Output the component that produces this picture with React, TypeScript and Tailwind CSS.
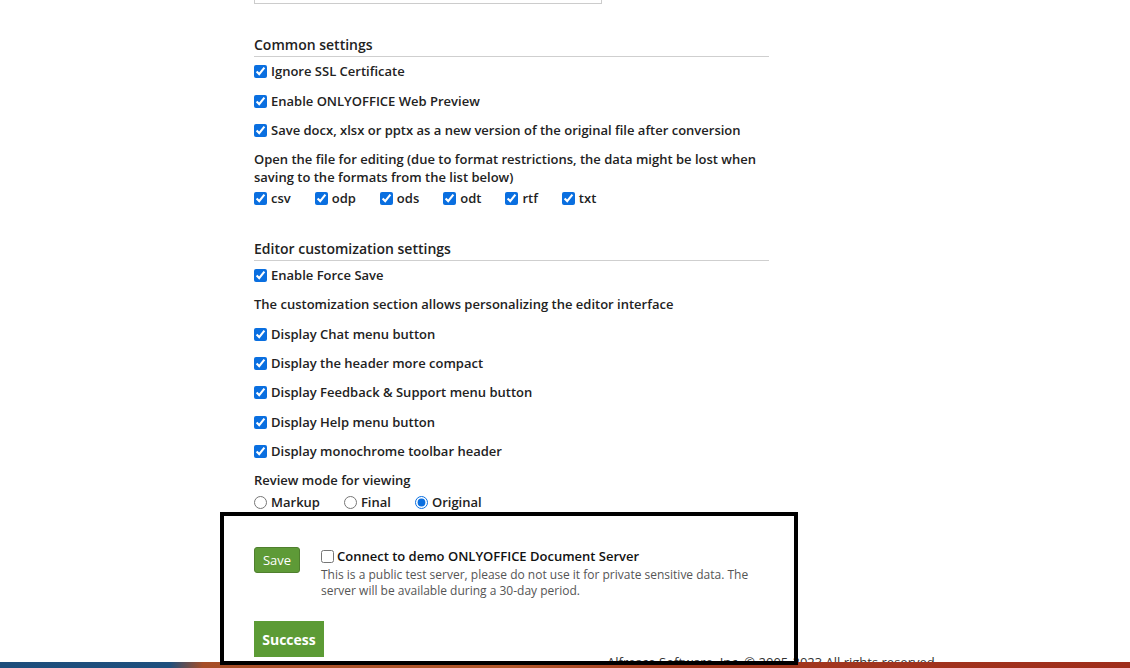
import type { ReactNode } from 'react';

const labelCls = "text-[13px] font-semibold text-[#222] leading-[18px]";

function Check({ children, className = '' }: { children: ReactNode; className?: string }) {
    return (
        <label className={`flex h-[18px] items-center gap-[4px] ${className}`}>
            <input type="checkbox" defaultChecked className="m-0 h-[13px] w-[13px] accent-[#0a6fe0]" />
            <span className={labelCls}>{children}</span>
        </label>
    );
}

function Heading({ children, className = '' }: { children: ReactNode; className?: string }) {
    return (
        <div className={`w-[515px] border-b border-[#cfcfcf] ${className}`}>
            <h3 className="h-[21px] text-[14px] font-semibold leading-[20px] text-[#222]">{children}</h3>
        </div>
    );
}

const formats = ['csv', 'odp', 'ods', 'odt', 'rtf', 'txt'];

export default function App() {
    return (
        <div
            className="relative h-[668px] w-[1130px] overflow-hidden bg-white"
            style={{ fontFamily: '"Open Sans", "Noto Sans", sans-serif' }}
        >
            <div className="flex flex-col pl-[254px]">
                {/* bottom of the previous input field */}
                <div className="h-[4px] w-[348px] border-x border-b border-[#cccccc]" />

                {/* Common settings */}
                <Heading className="mt-[31px]">Common settings</Heading>
                <Check className="mt-[5px]">Ignore SSL Certificate</Check>
                <Check className="mt-[12px]">Enable ONLYOFFICE Web Preview</Check>
                <Check className="mt-[11px]">
                    Save docx, xlsx or pptx as a new version of the original file after conversion
                </Check>
                <p className={`mt-[11px] w-[515px] ${labelCls}`}>
                    Open the file for editing (due to format restrictions, the data might be lost when saving to the
                    formats from the list below)
                </p>
                <div className="mt-[3px] flex">
                    {formats.map((f) => (
                        <Check key={f} className="mr-[24px]">
                            {f}
                        </Check>
                    ))}
                </div>

                {/* Editor customization settings */}
                <Heading className="mt-[32px]">Editor customization settings</Heading>
                <Check className="mt-[5px]">Enable Force Save</Check>
                <p className={`mt-[11px] ${labelCls}`}>
                    The customization section allows personalizing the editor interface
                </p>
                <Check className="mt-[12px]">Display Chat menu button</Check>
                <Check className="mt-[11px]">Display the header more compact</Check>
                <Check className="mt-[11px]">Display Feedback &amp; Support menu button</Check>
                <Check className="mt-[12px]">Display Help menu button</Check>
                <Check className="mt-[11px]">Display monochrome toolbar header</Check>
                <p className={`mt-[11px] ${labelCls}`}>Review mode for viewing</p>
                <div className="mt-[4px] flex h-[18px] items-center">
                    {['Markup', 'Final', 'Original'].map((m) => (
                        <label key={m} className="mr-[24px] flex items-center gap-[4px]">
                            <input
                                type="radio"
                                name="review"
                                defaultChecked={m === 'Original'}
                                className="m-0 h-[13px] w-[13px] accent-[#0a6fe0]"
                            />
                            <span className={labelCls}>{m}</span>
                        </label>
                    ))}
                </div>

                {/* Save + demo server */}
                <div className="mt-[36px] flex items-start">
                    <button className="h-[26px] w-[46px] rounded-[3px] border border-[#4f7f2e] bg-[#5e9a37] text-[13px] leading-[24px] text-white">
                        Save
                    </button>
                    <div className="ml-[21px] flex flex-col">
                        <label className="flex h-[18px] items-center gap-[3px]">
                            <input type="checkbox" className="m-0 h-[13px] w-[13px] accent-[#0a6fe0]" />
                            <span className="text-[13px] font-semibold leading-[18px] text-[#111]">
                                Connect to demo ONLYOFFICE Document Server
                            </span>
                        </label>
                        <p className="mt-[2px] w-[440px] text-[12px] leading-[16px] text-[#555]">
                            This is a public test server, please do not use it for private sensitive data. The server
                            will be available during a 30-day period.
                        </p>
                    </div>
                </div>

                <button className="mt-[22px] h-[36px] w-[70px] bg-[#5c9b35] text-[14px] font-bold text-white">
                    Success
                </button>

                {/* footer text, mostly hidden behind the footer band */}
                <div className="ml-[353px] mt-[-1px] h-[6px] overflow-hidden">
                    <p className="text-[13px] leading-[13px] text-[#333]">
                        Alfresco Software, Inc. © 2005-2023 All rights reserved.
                    </p>
                </div>
            </div>

            {/* footer band */}
            <div className="h-[10px] w-full bg-[linear-gradient(95deg,#1d4d7b_0%,#1e4f7d_15%,#a64d27_18%,#b3582b_45%,#a33a20_60%,#9f2d1b_100%)]" />

            {/* highlight frame */}
            <div className="pointer-events-none absolute left-[220px] top-[512px] h-[153px] w-[578px] border-4 border-black" />
        </div>
    );
}
